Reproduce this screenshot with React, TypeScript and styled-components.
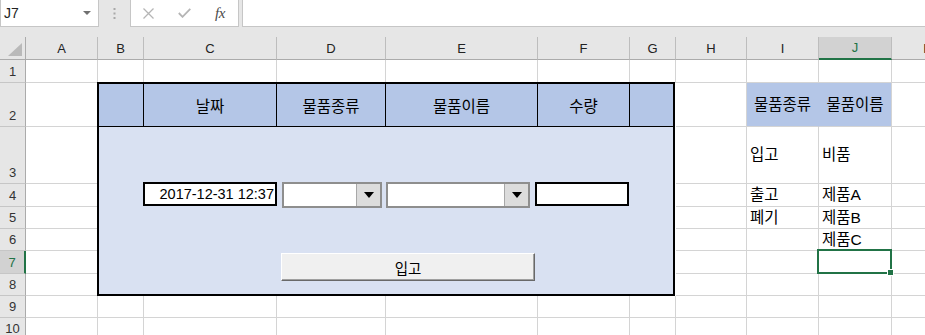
import React from 'react';
import styled, { createGlobalStyle, css } from 'styled-components';

const GREEN = '#217346';
const FONT = '"Liberation Sans", "Noto Sans CJK KR", sans-serif';

const GlobalStyle = createGlobalStyle`
  html, body {
    margin: 0;
    padding: 0;
    background: #fff;
    overflow: hidden;
  }
  body {
    font-family: ${FONT};
  }
`;

const Window = styled.div`
  width: 925px;
  height: 335px;
  overflow: hidden;
  background: #fff;
`;

/* ---------- formula bar ---------- */

const FormulaBar = styled.div`
  height: 37px;
  background: #e6e6e6;
  display: flex;
  align-items: flex-start;
`;

const NameBox = styled.div`
  box-sizing: border-box;
  width: 99px;
  height: 27px;
  background: #fff;
  border: 1px solid #c6c6c6;
  border-top: none;
  display: flex;
  align-items: center;
  justify-content: space-between;
  padding: 0 7px 0 3px;
  font-size: 14px;
  color: #222;
`;

const SmallCaret = styled.span`
  width: 0;
  height: 0;
  border-left: 4px solid transparent;
  border-right: 4px solid transparent;
  border-top: 4px solid #707070;
`;

const Grip = styled.div`
  width: 31px;
  height: 27px;
  display: flex;
  align-items: center;
  justify-content: center;
`;

const FxBox = styled.div`
  box-sizing: border-box;
  width: 109px;
  height: 27px;
  background: #fff;
  border: 1px solid #c6c6c6;
  border-top: none;
  display: flex;
  align-items: center;
  gap: 24px;
  padding-left: 12px;
`;

const FxText = styled.span`
  font-family: "Liberation Serif", serif;
  font-style: italic;
  font-size: 15px;
  color: #4a4a4a;
  letter-spacing: -0.5px;
`;

const FormulaInput = styled.div`
  box-sizing: border-box;
  flex: 1;
  margin-left: 3px;
  height: 27px;
  background: #fff;
  border: 1px solid #c6c6c6;
  border-top: none;
  border-right: none;
`;

/* ---------- sheet grid ---------- */

const Sheet = styled.div`
  display: grid;
  width: 963px;
  grid-template-columns: 26px 72px 46px 133px 109px 152px 92px 46px 71px 72px 73px 72px;
  grid-template-rows: 23px 23px 44px 57px 23px 22px 22px 23px 22px 22px 22px;
  font-family: ${FONT};
`;

const Corner = styled.div`
  box-sizing: border-box;
  position: relative;
  background: #e6e6e6;
  border-right: 1px solid #ababab;
  border-bottom: 1px solid #ababab;

  &::after {
    content: '';
    position: absolute;
    right: 3px;
    bottom: 3px;
    border-left: 14px solid transparent;
    border-bottom: 13px solid #b9b9b9;
  }
`;

const ColHead = styled.div<{ $active?: boolean }>`
  box-sizing: border-box;
  display: flex;
  align-items: center;
  justify-content: center;
  font-size: 13px;
  background: ${p => (p.$active ? '#d2d2d2' : '#e6e6e6')};
  color: ${p => (p.$active ? GREEN : '#222')};
  border-right: 1px solid #bdbdbd;
  border-bottom: ${p => (p.$active ? `2px solid ${GREEN}` : '1px solid #ababab')};
`;

const RowHead = styled.div<{ $active?: boolean }>`
  box-sizing: border-box;
  display: flex;
  align-items: flex-end;
  justify-content: center;
  padding-bottom: 3px;
  font-size: 13px;
  line-height: 15px;
  background: ${p => (p.$active ? '#d2d2d2' : '#e6e6e6')};
  color: ${p => (p.$active ? GREEN : '#333')};
  border-right: ${p => (p.$active ? `2px solid ${GREEN}` : '1px solid #ababab')};
  border-bottom: 1px solid #c6c6c6;
`;

const Cell = styled.div<{ $fill?: string; $center?: boolean; $joinRight?: boolean; $selected?: boolean }>`
  box-sizing: border-box;
  display: flex;
  align-items: center;
  justify-content: ${p => (p.$center ? 'center' : 'flex-start')};
  padding-left: ${p => (p.$center ? 0 : 3)}px;
  font-size: 15.5px;
  line-height: 18px;
  color: #000;
  white-space: nowrap;
  background: ${p => p.$fill || '#fff'};
  border-right: 1px solid ${p => (p.$joinRight && p.$fill ? p.$fill : '#d4d4d4')};
  border-bottom: 1px solid #d4d4d4;

  ${p =>
    p.$selected &&
    css`
      position: relative;
      &::after {
        content: '';
        position: absolute;
        left: -2px;
        top: -2px;
        right: -1px;
        bottom: -1px;
        border: 2px solid ${GREEN};
        z-index: 2;
      }
      &::before {
        content: '';
        position: absolute;
        right: -3px;
        bottom: -3px;
        width: 5px;
        height: 5px;
        background: ${GREEN};
        border: 1px solid #fff;
        z-index: 3;
      }
    `}
`;

/* ---------- input form on the sheet ---------- */

const Panel = styled.div`
  grid-column: 3 / 9;
  grid-row: 3 / 10;
  margin: -1px 1px 0 -1px;
  box-sizing: border-box;
  border: 2px solid #000;
  background: #d9e1f2;
  display: flex;
  flex-direction: column;
  position: relative;
  z-index: 1;
`;

const PanelHead = styled.div`
  box-sizing: border-box;
  height: 43px;
  display: grid;
  grid-template-columns: 45px 133px 109px 152px 92px 1fr;
  background: #b4c6e7;
  border-bottom: 1px solid #000;
`;

const HeadCell = styled.div`
  box-sizing: border-box;
  display: flex;
  align-items: center;
  justify-content: center;
  font-size: 15.5px;
  color: #000;
  border-right: 1px solid #000;

  &:last-child {
    border-right: none;
  }
`;

const PanelBody = styled.div`
  flex: 1;
  padding: 55px 0 0 44px;
`;

const ControlRow = styled.div`
  display: flex;
  align-items: flex-start;
  height: 26px;
`;

const TextBox = styled.div<{ $w: number; $gap?: number }>`
  box-sizing: border-box;
  width: ${p => p.$w}px;
  height: 24px;
  margin-left: ${p => p.$gap || 0}px;
  background: #fff;
  border: 2px solid #000;
  font-size: 14.5px;
  line-height: 20px;
  text-align: right;
  padding-right: 1px;
  white-space: nowrap;
  overflow: hidden;
`;

const Combo = styled.div<{ $w: number; $gap: number }>`
  box-sizing: border-box;
  width: ${p => p.$w}px;
  height: 26px;
  margin-left: ${p => p.$gap}px;
  background: #fff;
  border: 2px solid #8e8e8e;
  display: flex;
  justify-content: flex-end;
`;

const ComboButton = styled.div`
  box-sizing: border-box;
  width: 24px;
  background: #dcdcdc;
  border-left: 1px solid #a8a8a8;
  display: flex;
  align-items: center;
  justify-content: center;
`;

const Caret = styled.span`
  width: 0;
  height: 0;
  border-left: 5px solid transparent;
  border-right: 5px solid transparent;
  border-top: 6px solid #000;
`;

const SubmitButton = styled.div`
  box-sizing: border-box;
  width: 254px;
  height: 28px;
  margin: 45px 0 0 138px;
  background: #f0f0f0;
  border: 1px solid;
  border-color: #fff #696969 #696969 #fff;
  box-shadow: inset -1px -1px 0 #a0a0a0;
  display: flex;
  align-items: center;
  justify-content: center;
  font-size: 14.5px;
  color: #000;
`;

const COLS = ['A', 'B', 'C', 'D', 'E', 'F', 'G', 'H', 'I', 'J', 'K'];
const ROWS = [1, 2, 3, 4, 5, 6, 7, 8, 9, 10];

const DATA: Record<string, string> = {
  I2: '물품종류',
  J2: '물품이름',
  I3: '입고',
  J3: '비품',
  I4: '출고',
  J4: '제품A',
  I5: '폐기',
  J5: '제품B',
  J6: '제품C',
};

const FILLED: Record<string, boolean> = { I2: true, J2: true };

function underPanel(col: number, row: number) {
  return col >= 1 && col <= 6 && row >= 2 && row <= 8;
}

export default function App() {
  return (
    <Window>
      <GlobalStyle />
      <FormulaBar>
        <NameBox>
          <span>J7</span>
          <SmallCaret />
        </NameBox>
        <Grip>
          <svg width="3" height="11" viewBox="0 0 3 11">
            <rect x="0.5" y="0" width="2" height="2" fill="#a8a8a8" />
            <rect x="0.5" y="4.5" width="2" height="2" fill="#a8a8a8" />
            <rect x="0.5" y="9" width="2" height="2" fill="#a8a8a8" />
          </svg>
        </Grip>
        <FxBox>
          <svg width="11" height="11" viewBox="0 0 11 11">
            <path d="M0.5 0.5 L10.5 10.5 M10.5 0.5 L0.5 10.5" stroke="#b5b5b5" strokeWidth="1.3" />
          </svg>
          <svg width="13" height="10" viewBox="0 0 13 10">
            <path d="M0.8 5 L4.5 8.8 L12.3 0.8" stroke="#b5b5b5" strokeWidth="1.8" fill="none" />
          </svg>
          <FxText>fx</FxText>
        </FxBox>
        <FormulaInput />
      </FormulaBar>

      <Sheet>
        <Corner />
        {COLS.map(c => (
          <ColHead key={c} $active={c === 'J'}>
            {c}
          </ColHead>
        ))}

        {ROWS.map(r => (
          <React.Fragment key={r}>
            <RowHead $active={r === 7}>{r}</RowHead>
            {COLS.map((c, ci) => {
              if (underPanel(ci, r)) return null;
              const id = `${c}${r}`;
              const filled = FILLED[id];
              return (
                <Cell
                  key={id}
                  $fill={filled ? '#b4c6e7' : undefined}
                  $center={filled}
                  $joinRight={id === 'I2'}
                  $selected={id === 'J7'}
                >
                  {DATA[id]}
                </Cell>
              );
            })}
          </React.Fragment>
        ))}

        <Panel>
          <PanelHead>
            <HeadCell />
            <HeadCell>날짜</HeadCell>
            <HeadCell>물품종류</HeadCell>
            <HeadCell>물품이름</HeadCell>
            <HeadCell>수량</HeadCell>
            <HeadCell />
          </PanelHead>
          <PanelBody>
            <ControlRow>
              <TextBox $w={134}>2017-12-31 12:37</TextBox>
              <Combo $w={100} $gap={5}>
                <ComboButton>
                  <Caret />
                </ComboButton>
              </Combo>
              <Combo $w={144} $gap={4}>
                <ComboButton>
                  <Caret />
                </ComboButton>
              </Combo>
              <TextBox $w={94} $gap={5} />
            </ControlRow>
            <SubmitButton>입고</SubmitButton>
          </PanelBody>
        </Panel>
      </Sheet>
    </Window>
  );
}
